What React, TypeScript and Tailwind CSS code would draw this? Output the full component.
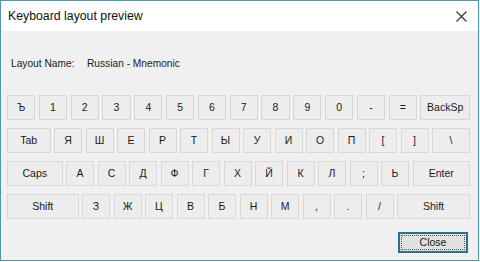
import React from "react";

const row1 = ["Ъ", "1", "2", "3", "4", "5", "6", "7", "8", "9", "0", "-", "="];
const row2 = ["Я", "Ш", "Е", "Р", "Т", "Ы", "У", "И", "О", "П", "[", "]"];
const row3 = ["А", "С", "Д", "Ф", "Г", "Х", "Й", "К", "Л", ";", "Ь"];
const row4 = ["З", "Ж", "Ц", "В", "Б", "Н", "М", ",", ".", "/"];

const keyCls =
  "h-[25px] shrink-0 flex items-center justify-center bg-[#ededed] border border-[#d8d8d8] text-[10.5px] text-[#1a1a1a]";

function Key({ label, w }: { label: string; w?: string }) {
  return <div className={`${keyCls} ${w ?? "w-[28px]"}`}>{label}</div>;
}

function Wide({ label, w }: { label: string; w?: string }) {
  return <div className={`${keyCls} ${w ?? "flex-1"}`}>{label}</div>;
}

export default function App() {
  return (
    <div className="w-[480px] h-[262px] bg-white" style={{ fontFamily: '"Liberation Sans", Arial, sans-serif' }}>
      <div className="w-[479px] h-[261px] border border-[#4f97ae] flex flex-col">
        {/* title bar */}
        <div className="h-[30px] bg-white flex items-center justify-between pl-[7px] pr-[11px] shrink-0">
          <span className="text-[12.3px] text-[#111] mt-[1px]">Keyboard layout preview</span>
          <svg width="11" height="11" viewBox="0 0 11 11" className="mt-[1px]">
            <path d="M0.5 0.5 L10.5 10.5 M10.5 0.5 L0.5 10.5" stroke="#333" strokeWidth="1.1" fill="none" />
          </svg>
        </div>

        <div className="flex-1 bg-[#f0f0f0] pl-[6px] pr-[8px] flex flex-col">
          <div className="mt-[26px] h-[14px] flex items-center text-[10.2px] text-[#1a1a1a] pl-[4px]">
            <span className="w-[76px]">Layout Name:</span>
            <span>Russian - Mnemonic</span>
          </div>

          <div className="mt-[24px] flex flex-col gap-[8px]">
            <div className="flex gap-[3.5px]">
              {row1.map((k) => (
                <Key key={k} label={k} w="w-[28.3px]" />
              ))}
              <Wide label="BackSp" />
            </div>
            <div className="flex gap-[3.5px]">
              <Wide label="Tab" w="w-[43.5px]" />
              {row2.map((k) => (
                <Key key={k} label={k} />
              ))}
              <Wide label="\" />
            </div>
            <div className="flex gap-[3.5px]">
              <Wide label="Caps" w="w-[55.5px]" />
              {row3.map((k) => (
                <Key key={k} label={k} />
              ))}
              <Wide label="Enter" />
            </div>
            <div className="flex gap-[3.5px]">
              <Wide label="Shift" w="w-[71.5px]" />
              {row4.map((k) => (
                <Key key={k} label={k} />
              ))}
              <Wide label="Shift" />
            </div>
          </div>

          <div className="mt-[13px] flex justify-end pr-[2px]">
            <button
              type="button"
              className="w-[70px] h-[21px] border-2 border-[#2b6f8e] bg-[#e1e1e1] p-[1px] flex"
            >
              <span className="flex-1 border border-dotted border-[#555] flex items-center justify-center text-[10.5px] text-[#1a1a1a]">
                Close
              </span>
            </button>
          </div>
        </div>
      </div>
    </div>
  );
}
